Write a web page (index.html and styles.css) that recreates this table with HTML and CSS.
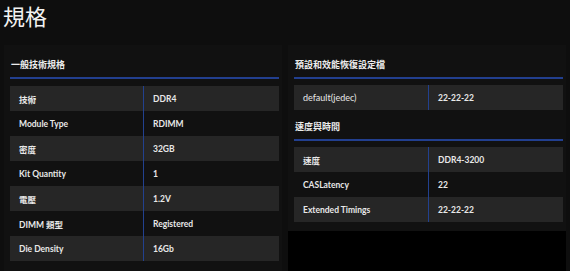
FILE: index.html
```html
<!DOCTYPE html>
<html lang="zh-Hant">
<head>
<meta charset="utf-8">
<link rel="stylesheet" href="styles.css">
</head>
<body>
<h1 class="title">規格</h1>
<div class="grid">
  <div class="col">
    <div class="card card-left">
      <h2 class="sec-head">一般技術規格</h2>
      <div class="table">
        <div class="row"><div class="k">技術</div><div class="v">DDR4</div></div>
        <div class="row"><div class="k">Module Type</div><div class="v">RDIMM</div></div>
        <div class="row"><div class="k">密度</div><div class="v">32GB</div></div>
        <div class="row"><div class="k">Kit Quantity</div><div class="v">1</div></div>
        <div class="row"><div class="k">電壓</div><div class="v">1.2V</div></div>
        <div class="row"><div class="k">DIMM 類型</div><div class="v">Registered</div></div>
        <div class="row"><div class="k">Die Density</div><div class="v">16Gb</div></div>
      </div>
    </div>
  </div>
  <div class="col col-right">
    <div class="card card-right">
      <h2 class="sec-head">預設和效能恢復設定檔</h2>
      <div class="table table-tight">
        <div class="row"><div class="k light">default(jedec)</div><div class="v">22-22-22</div></div>
      </div>
      <h2 class="sec-head sec-head-2">速度與時間</h2>
      <div class="table table-tight">
        <div class="row"><div class="k">速度</div><div class="v">DDR4-3200</div></div>
        <div class="row"><div class="k">CASLatency</div><div class="v">22</div></div>
        <div class="row"><div class="k">Extended Timings</div><div class="v">22-22-22</div></div>
      </div>
    </div>
  </div>
</div>
</body>
</html>
```

FILE: styles.css
```css
html, body {
  margin: 0;
  padding: 0;
  height: 100%;
  overflow: hidden;
}
body {
  background: #0e0e0e;
  color: #e8e8e8;
  font-family: "Lato", "Noto Sans CJK TC", sans-serif;
}
.title {
  margin: 0;
  padding-left: 3px;
  font-family: "Noto Sans CJK TC", sans-serif;
  font-weight: 400;
  font-size: 22px;
  line-height: 30px;
  color: #f2f2f2;
}
.grid {
  display: grid;
  grid-template-columns: 278px 278px;
  column-gap: 6px;
  margin-top: 15px;
  padding-left: 4px;
  height: 226px;
}
.col-right {
  background: #000;
}
.card {
  background: #111111;
  padding: 12px 3px 9px 6px;
}
.card-left {
  height: 100%;
  box-sizing: border-box;
}
.sec-head {
  margin: 0;
  padding: 0 0 4px 1px;
  font-family: "Noto Sans CJK TC", sans-serif;
  font-size: 9px;
  font-weight: 700;
  line-height: 16px;
  color: #ececec;
  border-bottom: 2px solid #223f8f;
}
.sec-head-2 {
  margin-top: 9px;
}
.table {
  margin-top: 7px;
}
.table-tight {
  margin-top: 6px;
}
.row {
  display: grid;
  grid-template-columns: 134px 1fr;
  height: 25px;
  font-size: 8.5px;
  font-weight: 700;
}
.card-right .row {
  grid-template-columns: 135px 1fr;
}
.table .row:nth-child(odd) {
  background: #262626;
}
.k, .v {
  display: flex;
  align-items: center;
}
.k {
  padding-left: 9px;
  border-right: 1px solid #22418f;
}
.v {
  padding-left: 9px;
}
.light {
  font-weight: 400;
  font-size: 9px;
}
```
